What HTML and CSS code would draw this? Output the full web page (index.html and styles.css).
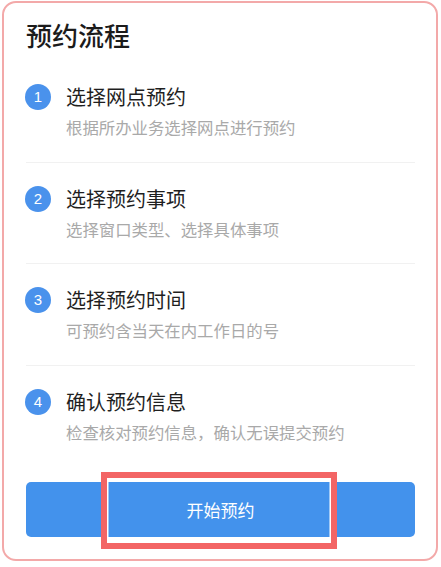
FILE: index.html
```html
<!DOCTYPE html>
<html lang="zh">
<head>
<meta charset="utf-8">
<link rel="stylesheet" href="styles.css">
</head>
<body>
<div class="frame">
  <h1 class="title">预约流程</h1>
  <ul class="steps">
    <li class="step">
      <div class="step-head"><span class="num">1</span><span class="step-title">选择网点预约</span></div>
      <div class="step-sub">根据所办业务选择网点进行预约</div>
    </li>
    <li class="step">
      <div class="step-head"><span class="num">2</span><span class="step-title">选择预约事项</span></div>
      <div class="step-sub">选择窗口类型、选择具体事项</div>
    </li>
    <li class="step">
      <div class="step-head"><span class="num">3</span><span class="step-title">选择预约时间</span></div>
      <div class="step-sub">可预约含当天在内工作日的号</div>
    </li>
    <li class="step last">
      <div class="step-head"><span class="num">4</span><span class="step-title">确认预约信息</span></div>
      <div class="step-sub">检查核对预约信息，确认无误提交预约</div>
    </li>
  </ul>
  <button class="start">开始预约</button>
  <div class="highlight"></div>
</div>
</body>
</html>
```

FILE: styles.css
```css
html, body {
  margin: 0;
  padding: 0;
  background: #ffffff;
}
body {
  font-family: "Noto Sans CJK SC", "Noto Sans", sans-serif;
}
.frame {
  position: relative;
  box-sizing: border-box;
  margin: 1px 0 0 2px;
  width: 436px;
  height: 560px;
  border: 2px solid #f3a9a9;
  border-radius: 14px;
  padding: 16px 21px 0 22px;
  display: flex;
  flex-direction: column;
}
.title {
  margin: 0 0 10px 0;
  font-size: 26px;
  line-height: 32px;
  font-weight: 500;
  color: #1b1b1b;
}
.steps {
  list-style: none;
  margin: 0;
  padding: 0;
}
.step {
  padding: 23px 0 23.5px 0;
  border-bottom: 1px solid #f1f1f1;
}
.step.last {
  border-bottom: none;
}
.step-head {
  display: flex;
  align-items: center;
  gap: 15px;
  height: 26px;
}
.num {
  width: 26px;
  height: 26px;
  border-radius: 50%;
  background: #4a92ec;
  color: #ffffff;
  font-family: "Liberation Sans", Arial, sans-serif;
  font-size: 15px;
  line-height: 26px;
  text-align: center;
  margin-left: -1px;
  flex: none;
}
.step-title {
  font-size: 20px;
  line-height: 26px;
  color: #1f1f1f;
}
.step-sub {
  margin: 6px 0 0 40px;
  font-size: 16.4px;
  line-height: 22px;
  color: #a9a9a9;
}
.start {
  margin-top: 16px;
  height: 55px;
  border: none;
  border-radius: 5px;
  background: #4392ec;
  color: #ffffff;
  font-family: "Noto Sans CJK SC", sans-serif;
  font-size: 17px;
  padding: 0;
}
.highlight {
  position: absolute;
  left: 97px;
  top: 469px;
  width: 236px;
  height: 77px;
  box-sizing: border-box;
  border: 6px solid #f36565;
  box-shadow: inset 0 0 0 1.5px #ffffff;
}
```
